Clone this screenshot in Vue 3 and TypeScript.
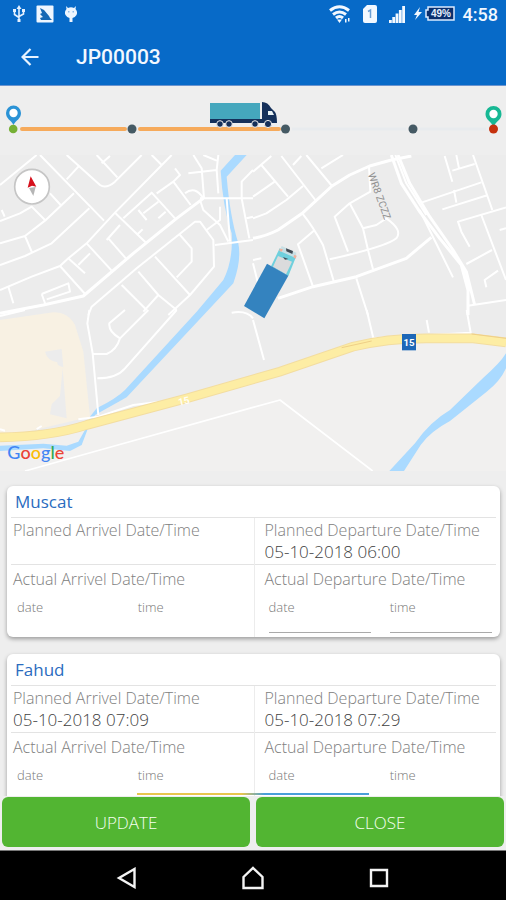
<script setup lang="ts">
interface Stage {
  label: string
  value: string
}
interface Stop {
  name: string
  arrival: Stage
  departure: Stage
  locked: boolean
}

const stops: Stop[] = [
  {
    name: 'Muscat',
    arrival: { label: 'Arrivel', value: '' },
    departure: { label: 'Departure', value: '05-10-2018 06:00' },
    locked: true,
  },
  {
    name: 'Fahud',
    arrival: { label: 'Arrivel', value: '05-10-2018 07:09' },
    departure: { label: 'Departure', value: '05-10-2018 07:29' },
    locked: false,
  },
]
</script>

<template>
  <div class="screen">
    <header class="top">
      <div class="status">
        <svg class="glyph" viewBox="0 0 14 18" width="14" height="18" fill="none" stroke="#e4f0ff" stroke-width="1.6">
          <path d="M7 2v13M2.500 6v3.500L7 12.500M11.500 6v3L7 11.500" />
          <path d="M7 0l2.500 4h-5zM1 4h3v3H1zM10 4h3v3h-3zM5.500 14h3v3h-3z" fill="#e4f0ff" stroke="none" />
        </svg>
        <svg class="glyph" viewBox="0 0 18 18" width="18" height="18">
          <rect x="0.500" y="0.500" width="17" height="17" rx="1" fill="#eef6ff" />
          <path d="M4 3l4 2 5 6 1 2 2 2H5l-1-2 3-1-3-3 2-1z" fill="#1768b4" />
        </svg>
        <svg class="glyph" viewBox="0 0 14 18" width="14" height="18">
          <path d="M2 1l2 2q3-1.500 6 0l2-2-.5 3Q14 7 12.500 10q-1.500 2.500-4 3V17h-3v-4Q3 12.500 1.500 10 0 7 2.500 4z" fill="#eef6ff" />
          <path d="M4 6h1.500v1.500H4zM8.500 6H10v1.500H8.500z" fill="#8fbce8" />
        </svg>
        <span class="spacer"></span>
        <svg class="glyph wifi" viewBox="0 0 22 18" width="22" height="18" fill="none" stroke="#f2f8ff" stroke-width="3">
          <path d="M1 5.500Q10.500-2 20 5.500M4 9.500q6.500-5 13 0M7 13q3.500-3 7 0" />
          <path d="M8 14.500h5L10.500 18zM16 14h1.500v3.500H16zM19 13h1.500v3.500H19z" fill="#f2f8ff" stroke="none" />
        </svg>
        <svg class="glyph sim" viewBox="0 0 14 18" width="14" height="18">
          <path d="M4 0h8q2 0 2 2v14q0 2-2 2H2q-2 0-2-2V4z" fill="#f2f8ff" />
          <path d="M5 6.500L7.500 5v8" fill="none" stroke="#6b9fd5" stroke-width="1.500" />
        </svg>
        <svg class="glyph signal" viewBox="0 0 16 17" width="16" height="17" fill="#f2f8ff">
          <path d="M0 14h2.800v3H0zM3.300 11h2.800v6H3.300zM6.600 7.500h2.800V17H6.600zM9.900 4h2.800v13H9.900zM13.200 0H16v17h-2.800z" />
        </svg>
        <svg class="glyph battery" viewBox="0 0 42 18" width="42" height="18">
          <path d="M7 2L1 10h3l-2 5 7-8H5.500z" fill="#f2f8ff" />
          <path d="M15 2h26v13H15v-3h-2V5h2z" fill="#0a2f6d" stroke="#dcecff" stroke-width="1.500" />
          <text x="28" y="12" text-anchor="middle" class="charge">49%</text>
        </svg>
        <time class="clock">4:58</time>
      </div>
      <div class="appbar">
        <button class="back" type="button" aria-label="Back">
          <svg viewBox="0 0 18 18" width="18" height="18" fill="none" stroke="#e8f3ff" stroke-width="2.200">
            <path d="M17.500 9H2M9.500 1L1.500 9l8 8" />
          </svg>
        </button>
        <h1>JP00003</h1>
      </div>
    </header>

    <svg class="route" viewBox="0 0 506 69">
      <path d="M22 43h103M140 43h139" stroke="#f6aa5b" stroke-width="4" stroke-linecap="round" />
      <path d="M292 43h114M420 43h66" stroke="#e8ebee" stroke-width="3" />
      <g fill="#455a64">
        <circle cx="132" cy="43" r="4.500" />
        <circle cx="285.500" cy="43" r="4.500" />
        <circle cx="413" cy="43" r="4.500" />
      </g>
      <path d="M13.500 39C11 34 6 33 6 27a7.500 7.500 0 0 1 15 0C21 33 16 34 13.500 39z" fill="#2b93d6" />
      <circle cx="13.500" cy="27" r="4.200" fill="#fff" />
      <circle cx="13.200" cy="43" r="4.300" fill="#76b035" />
      <path d="M493.500 41C491 35 485.500 34 485.500 28a8 8 0 0 1 16 0C501.500 34 496 35 493.500 41z" fill="#17b894" />
      <circle cx="493.500" cy="28" r="4.200" fill="#fff" />
      <circle cx="493.500" cy="43" r="4.500" fill="#c5310d" />
      <path d="M210 17h50v16h-50z" fill="#45a7bd" />
      <path d="M210 33h66v4h-66zM262 16q6 0 9 6l4 4q2 3 2 11h-15z" fill="#15305a" />
      <path d="M268 25h4l2 4h-6z" fill="#e9f2f5" />
      <g fill="#15305a" stroke="#eee" stroke-width="1">
        <circle cx="220" cy="38" r="3.300" />
        <circle cx="229" cy="38" r="3.300" />
        <circle cx="255" cy="38" r="3.300" />
        <circle cx="268" cy="38" r="3.600" />
      </g>
    </svg>

    <svg class="map" viewBox="0 0 1518 948" role="img" aria-label="Map">
      <rect width="1518" height="948" fill="#ececec" />
      <path d="M0 850Q180 840 300 800L1059 575 1279 548 1518 560V948H0z" fill="#f1f0ef" />
      <path d="M0 495L160 472Q205 472 225 510L250 590 270 785 0 850z" fill="#f8f1e3" />
      <path d="M135 590l50-8 5 55q-20-5-18-15-30-5-37-32zM188 640l12 150-50-12 5-30 25-25z" fill="#ececec" />
      <g fill="#aadaff">
        <path d="M740 0H705L662 47Q668 155 695 235 700 315 670 375L590 470 375 705Q350 730 290 760L270 785 255 825 235 860 200 872 130 866 0 872V888L130 880 210 888 245 870 262 825 285 780 380 727 625 465 700 385Q725 315 715 265 690 185 680 65z" />
        <path d="M1518 595Q1500 625 1450 668L1350 765Q1290 800 1245 865L1168 948H1212L1262 870Q1290 830 1350 798L1460 710Q1500 680 1518 640z" />
      </g>
      <g class="roads">
        <g transform="translate(0 -15)">
          <path d="M0 105L110 15M120 15L312 212M200 15L300 105Q318 118 345 95L425 15M200 88L235 50M290 15L352 82M305 40L330 18" />
          <path d="M515 15L345 188 260 280 205 325 180 348 95 380 0 420M455 15L485 45M0 213L60 190 95 170 135 210M0 280L75 258 135 212 222 130M0 345L75 318 155 280 268 175M75 258L95 305M150 130L182 165M5 180L14 200" />
          <path class="wide" d="M0 490L130 465 250 438 400 310 530 205 610 145" />
          <path d="M345 188L438 278M180 348L258 435M260 280L335 362M205 325L255 370M235 345L270 310M325 265L380 328M320 270L360 225M370 205L455 128 525 205M470 130L520 95 572 165M415 180L440 210M430 190L475 155M410 255L428 238M475 205L497 185M520 95L540 75 525 55M555 130Q585 105 610 145" />
          <path d="M580 15L605 55 612 145M600 145H759M565 70L650 60 655 15M650 60L655 130M610 15L650 32M600 150L610 180 660 225 685 275M660 170V210L620 240M680 145L690 275M645 285L759 270M759 60L725 95V145L748 265M740 205L759 200" />
          <path d="M265 495L275 470 410 355 585 215 600 215 640 270 642 350 570 435 505 495M540 255L575 295V335L530 382M465 320L570 435M415 365L475 435 530 480M475 435L430 485M365 405L440 480M25 410L40 460M125 432L205 400 210 425 140 448M125 432L137 465" />
        </g>
        <g transform="translate(759 -15)">
          <path d="M0 65L55 18M25 45L105 140M0 140L65 95M0 205L40 190 100 150 150 108M85 18L187 150M120 45L145 18M160 15L237 108M205 55L270 15" />
          <path class="wide" d="M0 265Q40 258 75 240L150 188 237 108 290 75 350 48 415 30 475 18" />
          <path d="M148 190Q180 230 210 285L242 393M185 240L135 283 180 410M348 50L352 125 290 160 245 200 285 305M290 160L330 235 345 300 360 358M330 235L370 225 400 205Q450 240 430 265 400 290 230 328M310 385L345 495M0 330L25 325M0 340L15 400" />
          <path class="wide" d="M75 445L180 410 310 380 460 325 535 262" />
          <path class="wide" d="M415 15L445 100 500 185 560 265 625 345 645 420V495M435 15L470 100 530 200 600 300 640 365 665 465" />
          <path d="M427 15L460 100 520 195M500 180L600 382M645 467L759 450M505 158L685 97M575 18L598 95M598 62L665 42M610 15L618 55M660 15L718 180M603 120L610 158M568 178L705 135M759 172L615 215 625 245 650 290M685 195L759 390M640 342L717 300M740 240L759 235M700 412L695 390 735 362" />
        </g>
        <g transform="translate(0 465)">
          <path d="M0 18L75 0M268 0L262 40 278 130 295 315M375 0L328 40Q325 65 360 85L445 0M280 132H320Q350 120 360 85M292 205Q350 205 375 175L530 0M695 8Q740 0 759 25M235 328L295 320 400 285 480 275M0 358L15 362M110 357L125 348" />
          <path d="M75 483L300 420 759 292 840 270 1118 483" class="thin" />
          <path d="M759 30L792 150M1100 0L1120 85 1412 68 1400 0M1280 30L1287 68" />
        </g>
      </g>
      <path d="M0 847Q150 845 260 810L560 730 840 650 1059 575Q1160 550 1279 550L1420 550 1518 562" fill="none" stroke="#f3dda0" stroke-width="29" />
      <path d="M0 847Q150 845 260 810L560 730 840 650 1059 575Q1160 550 1279 550L1420 550 1518 562" fill="none" stroke="#fdeda4" stroke-width="23" />
      <path d="M1025 578L1115 558M1415 537L1518 550" fill="none" stroke="#efcf87" stroke-width="3" />
      <text class="roadno" x="537" y="752" transform="rotate(-12 537 752)">15</text>
      <rect x="1206" y="537" width="42" height="49" fill="#1d67b7" />
      <text class="shield" x="1227" y="573" text-anchor="middle">15</text>
      <text class="street" x="1103" y="58" transform="rotate(70 1103 58)">WR8 ZCZZ</text>
      <g transform="translate(759 -15)">
        <path d="M80 295L130 318 106 378 54 349z" fill="#6fd0dd" />
        <path d="M75 318L117 335 99 373 60 350z" fill="#dadbdc" />
        <path d="M86 288L130 308 128 324 80 303z" fill="#c8dfe4" />
        <path d="M99 295L120 303 118 312 100 304zM90 321L106 327 96 329z" fill="#414b55" />
        <path d="M80 296l10 2-4 7-7-3zM124 314l7 3-3 9-7-4z" fill="#efb19e" />
        <path d="M42 341L106 377 34 505-27 468z" fill="#3483bf" />
      </g>
      <circle cx="96" cy="95" r="52" fill="#fff" stroke="#c5c5c5" stroke-width="5" />
      <path d="M92 64L109 95 96 92 83 98z" fill="#d5101c" />
      <path d="M87 99L107 96 100 123z" fill="#b5b5b5" />
      <text class="google" x="22" y="911"><tspan fill="#4285f4">G</tspan><tspan fill="#ea4335">o</tspan><tspan fill="#fbbc05">o</tspan><tspan fill="#4285f4">g</tspan><tspan fill="#34a853">l</tspan><tspan fill="#ea4335">e</tspan></text>
    </svg>

    <main class="stops">
      <section v-for="stop in stops" :key="stop.name" class="card">
        <h2>{{ stop.name }}</h2>
        <div class="grid">
          <div v-for="stage in [stop.arrival, stop.departure]" :key="stage.label" class="column">
            <div class="planned">
              <p class="caption">Planned {{ stage.label }} Date/Time</p>
              <p class="value">{{ stage.value }}</p>
            </div>
            <div class="actual">
              <p class="caption">Actual {{ stage.label }} Date/Time</p>
              <div class="fields">
                <label v-for="kind in ['date', 'time']" :key="kind" class="field">
                  <span>{{ kind }}</span>
                  <input type="text" :class="{ plain: stage.label === 'Arrivel' }" :readonly="stop.locked" />
                </label>
              </div>
            </div>
          </div>
        </div>
      </section>
      <div class="progress"></div>
    </main>

    <footer class="actions">
      <button type="button">UPDATE</button>
      <button type="button">CLOSE</button>
    </footer>

    <nav class="system">
      <button type="button" aria-label="Back">
        <svg viewBox="0 0 22 22" width="22" height="22"><path d="M18.500 2v18L3 11z" /></svg>
      </button>
      <button type="button" aria-label="Home">
        <svg viewBox="0 0 22 24" width="22" height="24"><path d="M1.500 11L11 2l9.500 9v11h-19z" /></svg>
      </button>
      <button type="button" aria-label="Recent apps">
        <svg viewBox="0 0 22 22" width="22" height="22"><path d="M3 3h16v16H3z" /></svg>
      </button>
    </nav>
  </div>
</template>

<style>
body {
  margin: 0;
  background: #eee;
}
</style>

<style scoped>
.screen {
  display: flex;
  flex-direction: column;
  height: 100vh;
  overflow: hidden;
  background: #eee;
  font-family: 'Open Sans', 'Noto Sans', sans-serif;
  font-weight: 300;
}
h1,
h2,
p {
  margin: 0;
}
button {
  border: 0;
  padding: 0;
  background: none;
  font: inherit;
}
svg {
  display: block;
}
.top {
  flex: none;
  background: #076ac8;
  border-bottom: 1px solid #6b94cf;
  color: #f2f8ff;
  font-family: Roboto, sans-serif;
}
.status {
  display: flex;
  align-items: center;
  height: 28px;
  padding: 0 8px 0 12px;
}
.glyph {
  flex: none;
  margin-right: 10px;
}
.spacer {
  flex: 1;
}
.wifi,
.sim {
  margin-right: 12px;
}
.signal {
  margin-right: 8px;
}
.battery {
  margin-right: 8px;
}
.charge {
  font: 700 10px 'Liberation Sans', sans-serif;
  fill: #e4efff;
}
.clock {
  font-size: 18px;
  font-weight: 500;
}
.appbar {
  display: flex;
  align-items: center;
  height: 57px;
  padding: 0 21px;
  gap: 37px;
}
h1 {
  font-size: 21px;
  font-weight: 500;
}
.route,
.map {
  flex: none;
  width: 100%;
}
.roads {
  fill: none;
  stroke: #fff;
  stroke-width: 6;
  stroke-linejoin: round;
}
.wide {
  stroke-width: 9;
}
.thin {
  stroke-width: 5;
}
.roadno {
  font: 700 30px Roboto, sans-serif;
  fill: #fffdf4;
}
.shield {
  font: 700 29px Roboto, sans-serif;
  fill: #fff;
}
.street {
  font: 400 31px Roboto, sans-serif;
  fill: #909090;
}
.google {
  font: 500 54px Lato, sans-serif;
}
.stops {
  position: relative;
  flex: 1;
  min-height: 0;
  overflow: hidden;
  display: flex;
  flex-direction: column;
  gap: 17px;
  padding: 15px 6px 0 7px;
}
.card {
  flex: none;
  padding: 0 4px;
  border-radius: 6px;
  background: #fff;
  box-shadow: 0 2px 4px rgba(0, 0, 0, 0.35);
}
h2 {
  padding-left: 4px;
  border-bottom: 1px solid #e3e3e3;
  font-size: 17px;
  font-weight: 400;
  line-height: 32px;
  height: 31px;
  color: #2a6cc0;
}
.grid {
  display: grid;
  grid-template-columns: 1fr 1fr;
}
.column {
  padding-left: 2px;
}
.column + .column {
  padding-left: 10px;
  border-left: 1px solid #ececec;
}
.planned {
  height: 46px;
  margin-left: -2px;
  padding-left: 2px;
  border-bottom: 1px solid #e3e3e3;
}
.column + .column .planned {
  margin-left: -10px;
  padding-left: 10px;
}
.caption {
  font-size: 16px;
  line-height: 24px;
  color: #808080;
}
.value {
  font-size: 17px;
  line-height: 20px;
  color: #3f3f3f;
}
.actual {
  height: 72px;
  padding-top: 2px;
  box-sizing: border-box;
}
.fields {
  display: grid;
  grid-template-columns: 1fr 1fr;
  gap: 19px;
  padding: 7px 4px 0;
}
.column:first-child .fields {
  padding-right: 14px;
}
.field {
  display: block;
  font-size: 13px;
  line-height: 18px;
  color: #777;
}
.field span {
  display: block;
}
.field input {
  display: block;
  box-sizing: border-box;
  width: 100%;
  height: 17px;
  padding: 0;
  border: 0;
  border-bottom: 1px solid #aaa;
  background: none;
  font: inherit;
  outline: 0;
}
.field .plain {
  border-color: transparent;
}
.progress {
  position: absolute;
  bottom: 1px;
  left: 27%;
  right: 27%;
  height: 2px;
  background: linear-gradient(90deg, #e8c74e 45%, #4a9fd8 55%);
}
.actions {
  flex: none;
  display: grid;
  grid-template-columns: 1fr 1fr;
  gap: 6px;
  padding: 1px 2px 3px;
}
.actions button {
  height: 50px;
  border-radius: 6px;
  background: #52b532;
  color: #f4ffef;
  font-size: 17px;
}
.system {
  flex: none;
  display: flex;
  justify-content: center;
  gap: 104px;
  height: 50px;
  border-top: 1px solid #777;
  box-sizing: border-box;
  background: #000;
}
.system button {
  display: flex;
  align-items: center;
  padding-top: 4px;
}
.system path {
  fill: none;
  stroke: #f4f4f4;
  stroke-width: 2.4;
}
</style>
